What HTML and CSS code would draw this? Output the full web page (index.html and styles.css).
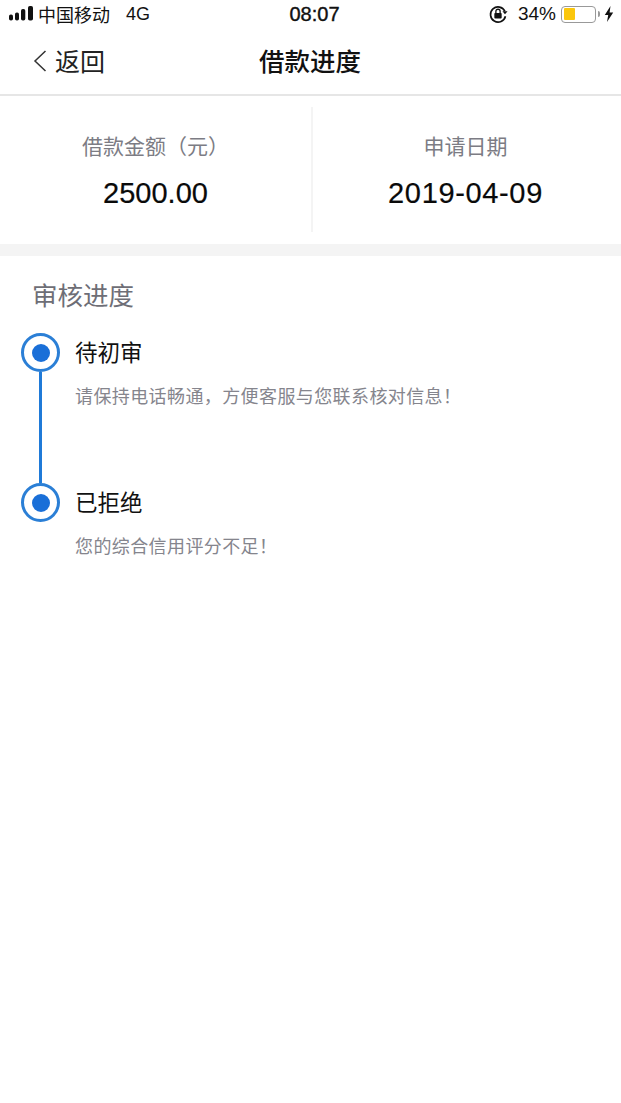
FILE: index.html
```html
<!DOCTYPE html>
<html lang="zh">
<head>
<meta charset="utf-8">
<title>借款进度</title>
<link rel="stylesheet" href="styles.css">
</head>
<body>
<div class="status">
  <div class="status-left">
    <svg class="signal" width="25" height="16" viewBox="0 0 25 16"><rect x="0" y="8.500" width="4" height="6" rx="1.800" fill="#111"/><rect x="6" y="6.500" width="4" height="8" rx="1.800" fill="#111"/><rect x="12" y="3" width="4.300" height="11.500" rx="1.800" fill="#111"/><rect x="19" y="0" width="5" height="14.500" rx="1.800" fill="#111"/></svg>
    <span class="carrier">中国移动</span>
    <span class="net">4G</span>
  </div>
  <div class="clock">08:07</div>
  <div class="status-right">
    <svg class="lock" width="20" height="20" viewBox="0 0 18 18"><path d="M15.200 6.500A6.800 6.800 0 1 0 15.700 11" fill="none" stroke="#111" stroke-width="1.500"/><path d="M13 6.600h4.600l-2.300 2.700z" fill="#111"/><rect x="5.700" y="8" width="6.600" height="5" rx=".8" fill="#111"/><path d="M7.100 8V6.600a1.900 1.900 0 0 1 3.800 0V8" fill="none" stroke="#111" stroke-width="1.200"/></svg>
    <span class="pct">34%</span>
    <div class="battery"><div class="battery-fill"></div></div>
    <div class="battery-cap"></div>
    <svg class="bolt" width="10" height="16" viewBox="0 0 10 16"><path d="M6.500 0 0.800 9h3.400L3 16l6.200-9.500H5.600z" fill="#111"/></svg>
  </div>
</div>

<header class="nav">
  <div class="back">
    <svg class="chevron" width="14" height="24" viewBox="0 0 14 24"><path d="M12.500 2 2 12l10.500 10" fill="none" stroke="#333" stroke-width="1.500"/></svg>
    <span>返回</span>
  </div>
  <h1 class="nav-title">借款进度</h1>
</header>

<section class="summary">
  <div class="cell cell-amount">
    <div class="label">借款金额（元）</div>
    <div class="value">2500.00</div>
  </div>
  <div class="divider"></div>
  <div class="cell cell-date">
    <div class="label">申请日期</div>
    <div class="value value-date">2019-04-09</div>
  </div>
</section>

<section class="progress">
  <h2 class="progress-title">审核进度</h2>
  <div class="step">
    <div class="rail"><div class="node"><div class="dot"></div></div><div class="line"></div></div>
    <div class="step-body">
      <div class="step-title">待初审</div>
      <div class="step-desc">请保持电话畅通，方便客服与您联系核对信息！</div>
    </div>
  </div>
  <div class="step">
    <div class="rail"><div class="node"><div class="dot"></div></div></div>
    <div class="step-body">
      <div class="step-title">已拒绝</div>
      <div class="step-desc">您的综合信用评分不足！</div>
    </div>
  </div>
</section>
</body>
</html>
```

FILE: styles.css
```css
* { box-sizing: border-box; }
html, body { margin: 0; padding: 0; }
body {
  width: 621px;
  height: 1103px;
  background: #fff;
  font-family: "Liberation Sans", "Noto Sans CJK SC", sans-serif;
  overflow: hidden;
}
.status {
  height: 28px;
  display: flex;
  align-items: center;
  justify-content: space-between;
  padding: 0 7px 0 9px;
  color: #111;
  font-size: 18px;
}
.status-left { display: flex; align-items: center; width: 200px; }
.signal { margin-right: 4px; }
.carrier { font-size: 18px; }
.net { margin-left: 16px; }
.clock { font-size: 20px; -webkit-text-stroke: 0.4px #111; margin-left: 6px; }
.status-right { display: flex; align-items: center; width: 200px; justify-content: flex-end; }
.lock { margin-right: 10px; }
.pct { font-size: 19px; margin-right: 5px; }
.battery {
  width: 35px;
  height: 17px;
  border: 1.500px solid #999;
  border-radius: 4px;
  padding: 1.500px;
}
.battery-fill { width: 11px; height: 100%; background: #fbc70d; border-radius: 1px; }
.battery-cap { width: 2px; height: 6px; background: #999; margin: 0 4px 0 2px; border-radius: 0 2px 2px 0; }
.nav {
  height: 68px;
  border-bottom: 2px solid #e6e6e6;
  position: relative;
  display: flex;
  align-items: center;
  justify-content: center;
  padding-bottom: 4px;
}
.back {
  position: absolute;
  left: 33px;
  top: 0;
  height: 66px;
  display: flex;
  align-items: center;
  font-size: 25px;
  color: #222;
}
.chevron { margin-right: 8px; }
.back span { margin-top: -2px; }
.nav-title { margin: 0 0 0 -1px; font-size: 25.500px; font-weight: 500; color: #111; }
.summary {
  height: 148px;
  display: flex;
  align-items: center;
}
.cell {
  text-align: center;
  height: 100%;
  padding-top: 37px;
}
.cell-amount { width: 311px; }
.cell-date { width: 308px; padding-right: 3px; }
.divider { width: 2px; height: 125px; background: #f4f4f4; margin-top: -1px; }
.label { font-size: 21px; line-height: 28px; color: #7c7c84; }
.value { font-size: 29px; line-height: 34px; color: #0a0a0a; margin-top: 15px; -webkit-text-stroke: 0.2px #0a0a0a; }
.value-date { letter-spacing: 0.65px; }
.progress { border-top: 12px solid #f4f4f4; padding: 0 0 0 21px; }
.progress-title {
  margin: 0 0 0 11px;
  padding-top: 24px;
  font-size: 25.500px;
  line-height: 32px;
  font-weight: 400;
  color: #6e6e76;
  height: 77px;
}
.step { display: flex; height: 150px; }
.rail { width: 39px; display: flex; flex-direction: column; align-items: center; }
.node {
  width: 39px;
  height: 39px;
  flex: none;
  border: 3.500px solid #2b7fd6;
  border-radius: 50%;
  display: flex;
  align-items: center;
  justify-content: center;
}
.dot { width: 18px; height: 18px; border-radius: 50%; background: #1a6fd8; }
.line { width: 3px; flex: 1; background: #1f7ad8; }
.step-body { margin-left: 15px; padding-top: 1px; }
.step-title { font-size: 22.500px; line-height: 40px; color: #111; }
.step-desc { font-size: 18px; letter-spacing: 0.4px; line-height: 26px; color: #85858d; margin-top: 10px; white-space: nowrap; }
```
